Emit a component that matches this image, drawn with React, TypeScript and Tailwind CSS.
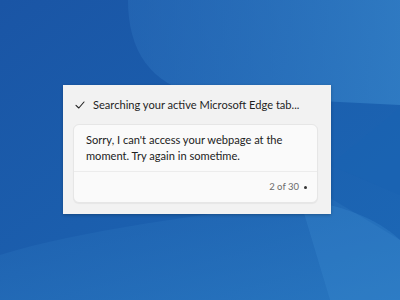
import React from "react";

const Wallpaper = () => (
  <svg className="absolute inset-0" width="400" height="300" viewBox="0 0 400 300">
    <defs>
      <linearGradient id="bg" x1="0" y1="0" x2="1" y2="1">
        <stop offset="0" stopColor="#1a55a5" />
        <stop offset="1" stopColor="#1c68b6" />
      </linearGradient>
      <linearGradient id="sw1" x1="0" y1="0" x2="1" y2="0">
        <stop offset="0" stopColor="#2a6fbb" stopOpacity="0.5" />
        <stop offset="1" stopColor="#3582c8" stopOpacity="0.75" />
      </linearGradient>
      <linearGradient id="sw2" x1="0" y1="0" x2="1" y2="1">
        <stop offset="0" stopColor="#1f62b0" stopOpacity="0.6" />
        <stop offset="1" stopColor="#2d7cc4" stopOpacity="0.7" />
      </linearGradient>
    </defs>
    <rect width="400" height="300" fill="url(#bg)" />
    <path d="M128 0 C 128 50, 150 85, 200 95 L 400 105 L 400 0 Z" fill="url(#sw1)" />
    <path d="M330 165 L 400 108 L 400 195 Z" fill="#1a63b2" opacity="0.8" />
    <path d="M0 255 C 80 230, 200 215, 330 198 L 400 240 L 400 300 L 0 300 Z" fill="url(#sw2)" />
    <path d="M300 200 C 350 205, 385 225, 400 240 L 400 300 L 330 300 Z" fill="#3a8bd0" opacity="0.3" />
  </svg>
);

const App = () => {
  return (
    <div
      className="relative w-[400px] h-[300px] overflow-hidden"
      style={{ fontFamily: 'Lato, "Noto Sans", sans-serif' }}
    >
      <Wallpaper />
      <div className="relative pt-[85px] pl-[63px]">
        <div className="w-[268px] h-[129px] bg-[#f2f2f2] px-[10px] pt-[10px] shadow-[0_1px_3px_rgba(0,0,0,0.25)]">
          <div className="flex items-center gap-[8px] h-[19px] pl-[2px] text-[11.1px] text-[#1f1f1f] whitespace-nowrap">
            <svg className="shrink-0" width="10" height="10" viewBox="0 0 10 10" fill="none">
              <path d="M1 5.3 L3.8 8 L9 2" stroke="#222" strokeWidth="1.1" strokeLinecap="round" strokeLinejoin="round" />
            </svg>
            <span className="leading-none">Searching your active Microsoft Edge tab...</span>
          </div>
          <div className="mt-[10px] w-[245px] rounded-[6px] border border-[#e6e6e6] bg-[#fafafa] shadow-[0_1px_1px_rgba(0,0,0,0.05)]">
            <div className="pl-[12px] pr-[20px] pt-[7px] pb-[7px] text-[11.1px] leading-[16px] text-[#222]">
              Sorry, I can't access your webpage at the moment. Try again in sometime.
            </div>
            <div className="border-t border-[#ececec] flex items-center justify-end gap-[5px] pr-[10px] h-[31px] text-[9.5px] text-[#6b6b6b]">
              <span>2 of 30</span>
              <span className="w-[3px] h-[3px] rounded-full bg-[#333]" />
            </div>
          </div>
        </div>
      </div>
    </div>
  );
};

export default App;
